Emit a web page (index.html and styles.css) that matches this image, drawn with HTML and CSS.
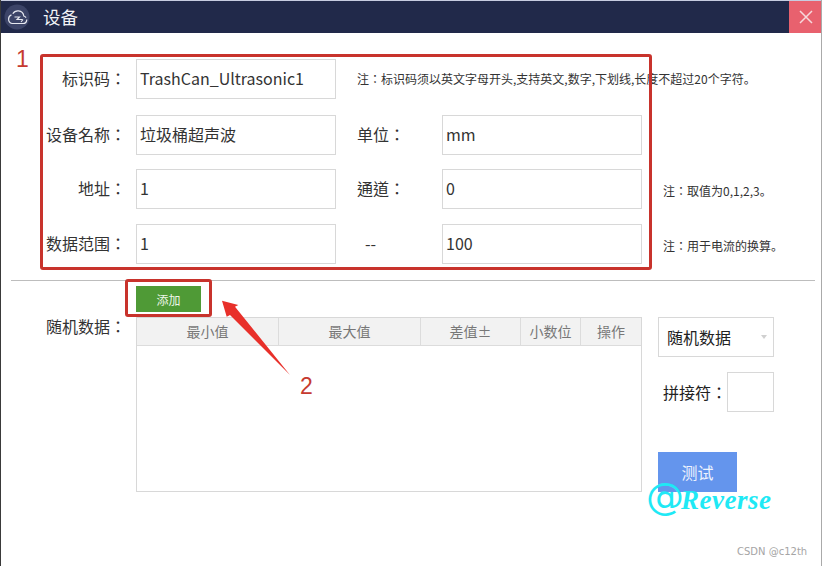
FILE: index.html
```html
<!DOCTYPE html>
<html>
<head>
<meta charset="utf-8">
<title>设备</title>
<link rel="stylesheet" href="styles.css">
</head>
<body>
<div class="window">
  <header class="titlebar">
    <div class="title-left">
      <svg class="logo" width="26" height="26" viewBox="0 0 26 26">
        <circle cx="13" cy="13" r="12.5" fill="#3c4468"/>
        <path d="M8 19.500h11a3.800 3.800 0 0 0 .8-7.500 6 6 0 0 0-11.500-1.300 4.500 4.500 0 0 0-.3 8.800z" fill="none" stroke="#e6e8f0" stroke-width="1.200" stroke-dasharray="17 2"/>
        <path d="M10.500 13h5l-2.500 2.500h5.500M17 18l2-2.500" fill="none" stroke="#e6e8f0" stroke-width="1.100"/>
      </svg>
      <span class="title">设备</span>
    </div>
    <button class="close" type="button" aria-label="关闭">
      <svg width="14" height="14" viewBox="0 0 14 14"><path d="M1 1l12 12M13 1L1 13" stroke="#f6d9dc" stroke-width="1.500" fill="none"/></svg>
    </button>
  </header>

  <main class="content">
    <section class="form">
      <label class="label">标识码：</label>
      <div class="field">TrashCan_Ultrasonic1</div>
      <p class="note note-wide">注：标识码须以英文字母开头,支持英文,数字,下划线,长度不超过20个字符<span class="stop">。</span></p>

      <label class="label">设备名称：</label>
      <div class="field">垃圾桶超声波</div>
      <label class="label-2">单位：</label>
      <div class="field">mm</div>
      <span></span>

      <label class="label">地址：</label>
      <div class="field">1</div>
      <label class="label-2">通道：</label>
      <div class="field">0</div>
      <p class="note note-low">注：取值为0,1,2,3<span class="stop">。</span></p>

      <label class="label">数据范围：</label>
      <div class="field">1</div>
      <span class="label-2 dash">--</span>
      <div class="field">100</div>
      <p class="note note-low">注：用于电流的换算<span class="stop">。</span></p>
    </section>

    <hr class="divider">

    <div class="add-row"><button class="btn-add" type="button">添加</button></div>

    <section class="data">
      <label class="label data-label">随机数据：</label>
      <div class="table">
        <div class="thead">
          <span class="th">最小值</span>
          <span class="th">最大值</span>
          <span class="th">差值±</span>
          <span class="th">小数位</span>
          <span class="th">操作</span>
        </div>
      </div>
      <div class="side">
        <div class="select"><span>随机数据</span><i class="caret"></i></div>
        <div class="joiner"><span>拼接符：</span><div class="joiner-input"></div></div>
        <button class="btn-test" type="button">测试</button>
      </div>
    </section>
  </main>

  <div class="mark mark-box1"></div>
  <div class="mark mark-box2"></div>
  <span class="mark-num num1">1</span>
  <span class="mark-num num2">2</span>
  <svg class="arrow" width="80" height="90" viewBox="0 0 80 90">
    <polygon points="2,10.700 18.300,15 15,16.700 70,85 10,25 6.700,26.700" fill="#e8302a"/>
  </svg>
  <div class="wm"><span class="wm-at">@</span><span class="wm-text">Reverse</span></div>
  <span class="csdn">CSDN @c12th</span>
</div>
</body>
</html>
```
FILE: styles.css
```css
* { box-sizing: border-box; }
html, body { margin: 0; padding: 0; background: #fff; }
body { font-family: "Noto Sans CJK TC", "Noto Sans", sans-serif; color: #333; }
.window {
  position: relative;
  width: 822px;
  height: 566px;
  overflow: hidden;
  background: #fff;
  border-left: 1px solid #3a3a3a;
  border-right: 1px solid #aaa;
}
.titlebar {
  display: flex;
  justify-content: space-between;
  height: 33px;
  margin: 0 -1px;
  background: #21294a;
  border-top: 1px solid #c7cce0;
}
.title-left { display: flex; align-items: center; gap: 13px; padding-left: 4px; }
.logo { display: block; }
.title { font-size: 17.500px; line-height: 24px; color: #f2f3f7; }
.close {
  display: flex;
  align-items: center;
  justify-content: center;
  width: 33px;
  padding: 0;
  border: 0;
  background: #e8616e;
}
.content { display: flex; flex-direction: column; }
.form {
  display: grid;
  grid-template-columns: 124px 200px 106px 200px 1fr;
  grid-template-rows: 56px 54px 55px 40px;
  margin-top: 26px;
  padding-left: 11px;
}
.label, .label-2 { font-size: 16px; line-height: 38px; color: #333; white-space: nowrap; }
.label { text-align: right; padding-right: 10px; }
.label-2 { padding-left: 21px; }
.dash { padding-left: 29px; }
.field {
  height: 40px;
  padding: 0 3px;
  border: 1px solid #d8d8d8;
  font-family: "Noto Sans CJK SC", sans-serif;
  font-size: 16px;
  line-height: 36px;
  color: #333;
  white-space: nowrap;
}
.note {
  margin: 0;
  padding-left: 21px;
  font-size: 12px;
  line-height: 40px;
  color: #333;
  white-space: nowrap;
}
.note-wide { grid-column: 3 / -1; }
.note-low { padding-top: 2px; }
.stop { font-family: "Noto Sans CJK SC", sans-serif; }
.divider {
  height: 1px;
  margin: 16px 6px 1px 10px;
  border: 0;
  background: #bdbdbd;
}
.add-row { padding: 4px 0 0 135px; }
.btn-add {
  display: block;
  width: 65px;
  height: 26px;
  padding: 0;
  border: 0;
  background: #4f9a36;
  color: #eef6e8;
  font-family: inherit;
  font-size: 12px;
}
.data {
  display: flex;
  margin-top: 5px;
  padding-left: 11px;
}
.data-label { width: 124px; flex: none; line-height: 18px; }
.table {
  width: 506px;
  height: 175px;
  border: 1px solid #d8d8d8;
}
.thead {
  display: grid;
  grid-template-columns: 142px 142px 100px 60px 1fr;
  height: 28px;
  background: #f2f2f2;
  border-bottom: 1px solid #dcdcdc;
}
.th {
  font-size: 14px;
  line-height: 27px;
  text-align: center;
  color: #777;
  border-right: 1px solid #dcdcdc;
}
.th:last-child { border-right: 0; }
.side {
  display: flex;
  flex-direction: column;
  align-items: flex-start;
  width: 116px;
  margin-left: 16px;
}
.select {
  display: flex;
  align-items: center;
  justify-content: space-between;
  width: 116px;
  height: 40px;
  padding: 0 6px 0 8px;
  border: 1px solid #d8d8d8;
  font-size: 16px;
  color: #222;
}
.caret {
  width: 0;
  height: 0;
  border: 3px solid transparent;
  border-top: 4px solid #d0d0d0;
  border-bottom: 0;
}
.joiner {
  display: flex;
  align-items: center;
  justify-content: space-between;
  width: 116px;
  height: 40px;
  margin-top: 15px;
  padding-left: 5px;
  font-size: 16px;
  color: #222;
}
.joiner span { white-space: nowrap; }
.joiner-input { width: 47px; height: 40px; flex: none; border: 1px solid #d8d8d8; }
.btn-test {
  width: 79px;
  height: 40px;
  margin-top: 40px;
  padding: 0;
  border: 0;
  background: #6495ed;
  color: #eef3fd;
  font-family: inherit;
  font-size: 16px;
}
.mark {
  position: absolute;
  border: 3px solid #c8332c;
  border-radius: 3px;
  pointer-events: none;
}
.mark-box1 { left: 39px; top: 54px; width: 612px; height: 216px; }
.mark-box2 { left: 124px; top: 279px; width: 87px; height: 38px; }
.mark-num {
  position: absolute;
  font-family: "Liberation Sans", sans-serif;
  font-size: 23px;
  line-height: 26px;
  color: #c63a30;
}
.num1 { left: 15px; top: 46px; }
.num2 { left: 299px; top: 373px; }
.arrow { position: absolute; left: 219px; top: 290px; }
.wm {
  position: absolute;
  left: 645px;
  top: 476px;
  display: flex;
  align-items: baseline;
  color: #1fe9f5;
  line-height: 40px;
  white-space: nowrap;
}
.wm-at { font-family: "DejaVu Sans", sans-serif; font-size: 38px; }
.wm-text {
  margin-left: -3px;
  font-family: "Liberation Serif", serif;
  font-style: italic;
  font-weight: 700;
  font-size: 27px;
  letter-spacing: 0.500px;
}
.csdn {
  position: absolute;
  left: 736px;
  top: 545px;
  font-family: "DejaVu Sans", sans-serif;
  font-size: 10px;
  line-height: 14px;
  color: #a5a5a5;
  white-space: nowrap;
}
```
